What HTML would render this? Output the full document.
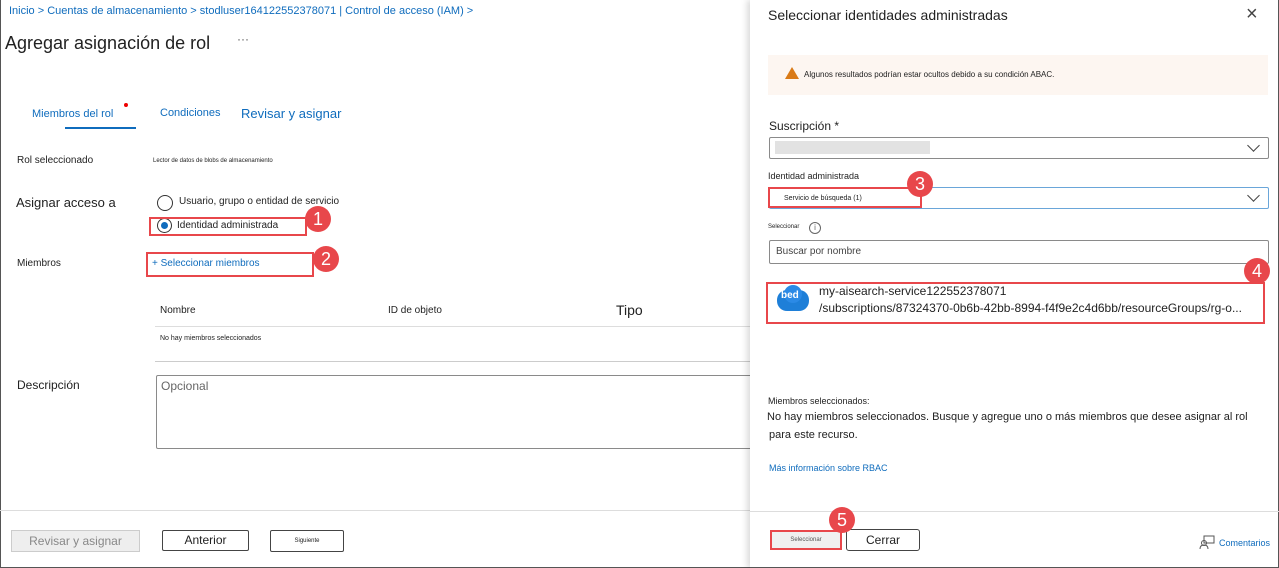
<!DOCTYPE html><html><head><meta charset="utf-8"><style>
*{margin:0;padding:0;box-sizing:border-box}
body{width:1279px;height:568px;overflow:hidden;background:#fff;font-family:"Liberation Sans",sans-serif;color:#222;position:relative}
.a{position:absolute;white-space:nowrap}
.b{color:#0f6cbd}
.rb{position:absolute;border:2px solid #e8474b}
.n{position:absolute;width:26px;height:26px;border-radius:50%;background:#e8474b;color:#fff;font-size:18px;text-align:center;line-height:26px}
.box{position:absolute;border:1px solid #8a8a8a;border-radius:2px;background:#fff}
.chev{position:absolute;width:9px;height:9px;border-right:1.3px solid #444;border-bottom:1.3px solid #444;transform:rotate(45deg)}
</style></head><body>
<div style="position:absolute;left:0;top:0;width:1279px;height:568px;border:1px solid #555;border-top:none;border-right:none"></div>
<div class="a b" style="left:9px;top:5px;font-size:11px">Inicio &gt; Cuentas de almacenamiento &gt; stodluser164122552378071 | Control de acceso (IAM) &gt;</div>
<div class="a" style="left:5px;top:33px;font-size:18px;color:#222">Agregar asignación de rol</div>
<div class="a" style="left:237px;top:32px;font-size:12px;color:#555">···</div>
<div class="a b" style="left:32px;top:108px;font-size:11px">Miembros del rol</div>
<div class="a" style="left:124px;top:103px;width:4px;height:4px;border-radius:50%;background:#e00"></div>
<div class="a" style="left:65px;top:127px;width:71px;height:2px;background:#0f6cbd"></div>
<div class="a b" style="left:160px;top:107px;font-size:11px">Condiciones</div>
<div class="a b" style="left:241px;top:106px;font-size:13px">Revisar y asignar</div>
<div class="a" style="left:17px;top:155px;font-size:10px">Rol seleccionado</div>
<div class="a" style="left:153px;top:158px;font-size:6px">Lector de datos de blobs de almacenamiento</div>
<div class="a" style="left:16px;top:195px;font-size:13px">Asignar acceso a</div>
<div class="a" style="left:157px;top:195px;width:16px;height:16px;border:1px solid #333;border-radius:50%"></div>
<div class="a" style="left:179px;top:196px;font-size:10px">Usuario, grupo o entidad de servicio</div>
<div class="a" style="left:157px;top:218px;width:15px;height:15px;border:1px solid #333;border-radius:50%"></div>
<div class="a" style="left:161px;top:222px;width:7px;height:7px;background:#0f6cbd;border-radius:50%"></div>
<div class="a" style="left:177px;top:220px;font-size:10px">Identidad administrada</div>
<div class="rb" style="left:149px;top:217px;width:158px;height:19px"></div>
<div class="n" style="left:305px;top:206px">1</div>
<div class="a" style="left:17px;top:258px;font-size:10px">Miembros</div>
<div class="a b" style="left:152px;top:258px;font-size:10px">+ Seleccionar miembros</div>
<div class="rb" style="left:146px;top:252px;width:168px;height:25px"></div>
<div class="n" style="left:313px;top:246px">2</div>
<div class="a" style="left:160px;top:305px;font-size:10px">Nombre</div>
<div class="a" style="left:388px;top:305px;font-size:10px">ID de objeto</div>
<div class="a" style="left:616px;top:302px;font-size:14px">Tipo</div>
<div class="a" style="left:155px;top:326px;width:595px;height:1px;background:#ddd"></div>
<div class="a" style="left:160px;top:335px;font-size:7px">No hay miembros seleccionados</div>
<div class="a" style="left:155px;top:361px;width:595px;height:1px;background:#ccc"></div>
<div class="a" style="left:17px;top:378px;font-size:12px">Descripción</div>
<div class="box" style="left:156px;top:375px;width:600px;height:74px"></div>
<div class="a" style="left:161px;top:379px;font-size:12px;color:#666">Opcional</div>
<div class="a" style="left:0;top:510px;width:750px;height:1px;background:#ddd"></div>
<div class="a" style="left:11px;top:530px;width:129px;height:22px;background:#eee;border:1px solid #ccc;color:#888;font-size:12px;text-align:center;line-height:20px">Revisar y asignar</div>
<div class="a" style="left:162px;top:530px;width:87px;height:21px;border:1px solid #444;border-radius:2px;font-size:12px;text-align:center;line-height:19px">Anterior</div>
<div class="a" style="left:270px;top:530px;width:74px;height:22px;border:1px solid #444;border-radius:2px;font-size:6px;text-align:center;line-height:20px">Siguiente</div>
<div class="a" style="left:750px;top:0;width:529px;height:568px;background:#fff;box-shadow:-3px 0 6px rgba(0,0,0,.15);border-right:1px solid #555;border-bottom:1px solid #555"></div>
<div class="a" style="left:768px;top:7px;font-size:14px">Seleccionar identidades administradas</div>
<div class="a" style="left:1246px;top:3px;font-size:20px;color:#444">×</div>
<div class="a" style="left:768px;top:55px;width:500px;height:40px;background:#fdf6f1"></div>
<div class="a" style="left:785px;top:67px;width:0;height:0;border-left:7px solid transparent;border-right:7px solid transparent;border-bottom:12px solid #d97a17"></div>
<div class="a" style="left:804px;top:70px;font-size:8px">Algunos resultados podrían estar ocultos debido a su condición ABAC.</div>
<div class="a" style="left:769px;top:119px;font-size:12px">Suscripción *</div>
<div class="box" style="left:769px;top:137px;width:500px;height:22px"></div>
<div class="a" style="left:775px;top:141px;width:155px;height:13px;background:#e2e2e2"></div>
<div class="chev" style="left:1249px;top:141px"></div>
<div class="a" style="left:768px;top:171px;font-size:9px">Identidad administrada</div>
<div class="box" style="left:769px;top:187px;width:500px;height:22px;border-color:#6aa6d9"></div>
<div class="a" style="left:784px;top:195px;font-size:7px">Servicio de búsqueda (1)</div>
<div class="chev" style="left:1249px;top:191px"></div>
<div class="rb" style="left:768px;top:187px;width:154px;height:21px"></div>
<div class="n" style="left:907px;top:171px">3</div>
<div class="a" style="left:768px;top:224px;font-size:6px">Seleccionar</div>
<div class="a" style="left:809px;top:222px;width:12px;height:12px;border:1px solid #666;border-radius:50%;font-size:8px;text-align:center;line-height:10px;color:#666">i</div>
<div class="box" style="left:769px;top:240px;width:500px;height:24px"></div>
<div class="a" style="left:776px;top:246px;font-size:10px;color:#444">Buscar por nombre</div>
<div class="a" style="left:777px;top:290px;width:32px;height:21px;border-radius:10px;background:#1e7fd8"></div>
<div class="a" style="left:784px;top:285px;width:18px;height:18px;border-radius:50%;background:#2b8ae6"></div>
<div class="a" style="left:781px;top:290px;font-size:10px;color:#fff;font-weight:bold">bed</div>
<div class="a" style="left:819px;top:284px;font-size:12px">my-aisearch-service122552378071</div>
<div class="a" style="left:819px;top:301px;font-size:12px">/subscriptions/87324370-0b6b-42bb-8994-f4f9e2c4d6bb/resourceGroups/rg-o...</div>
<div class="rb" style="left:766px;top:282px;width:499px;height:42px"></div>
<div class="n" style="left:1244px;top:258px">4</div>
<div class="a" style="left:768px;top:396px;font-size:9px">Miembros seleccionados:</div>
<div class="a" style="left:767px;top:411px;font-size:11px">No hay miembros seleccionados. Busque y agregue uno o más miembros que desee asignar al rol</div>
<div class="a" style="left:769px;top:429px;font-size:11px">para este recurso.</div>
<div class="a b" style="left:769px;top:463px;font-size:9px">Más información sobre RBAC</div>
<div class="a" style="left:750px;top:511px;width:529px;height:1px;background:#ddd"></div>
<div class="a" style="left:770px;top:530px;width:72px;height:20px;background:#f0f0f0;border:2px solid #e8474b;font-size:6px;text-align:center;line-height:16px;color:#555">Seleccionar</div>
<div class="a" style="left:846px;top:529px;width:74px;height:22px;border:1px solid #444;border-radius:3px;font-size:12px;text-align:center;line-height:20px">Cerrar</div>
<div class="n" style="left:829px;top:507px">5</div>
<svg class="a" style="left:1199px;top:535px" width="16" height="15" viewBox="0 0 16 15" fill="none" stroke="#555" stroke-width="1"><rect x="5" y="1" width="10" height="7"/><circle cx="5" cy="8" r="2.5"/><path d="M1 14c0-3 2-4 4-4s4 1 4 4"/></svg>
<div class="a b" style="left:1219px;top:538px;font-size:9px">Comentarios</div>
</body></html>
